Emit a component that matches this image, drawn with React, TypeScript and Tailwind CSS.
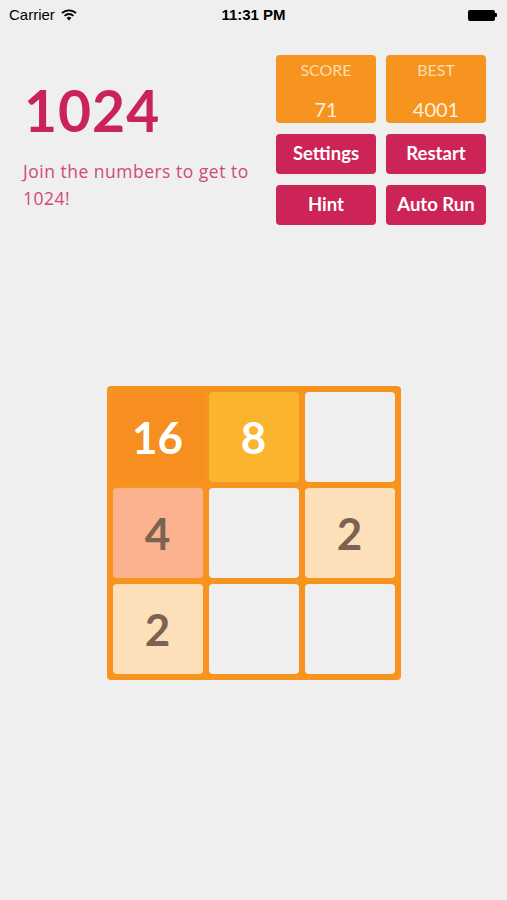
import React from "react";

const tiles: (number | null)[] = [16, 8, null, 4, null, 2, 2, null, null];

function tileClass(v: number | null) {
  if (v === null) return "bg-[#efefef]";
  if (v === 16) return "bg-[#f68f1f] text-white";
  if (v === 8) return "bg-[#fbb42e] text-white";
  if (v === 4) return "bg-[#fcb28e] text-[#7a6350]";
  return "bg-[#fde0b9] text-[#7a6350]";
}

export default function App() {
  return (
    <div className="w-[507px] h-[900px] bg-[#efefef] flex flex-col overflow-hidden">
      {/* status bar */}
      <div className="h-[30px] flex items-center px-[9px] relative font-['Liberation_Sans',sans-serif] text-[15px] text-black">
        <div className="flex items-center gap-[6px]">
          <span>Carrier</span>
          <svg width="16" height="12" viewBox="0 0 16 12">
            <path d="M1 4.2 A10 10 0 0 1 15 4.2" stroke="black" strokeWidth="1.8" fill="none" />
            <path d="M3.6 6.8 A6.3 6.3 0 0 1 12.4 6.8" stroke="black" strokeWidth="1.8" fill="none" />
            <path d="M8 11.5 L5.6 8.9 A3.4 3.4 0 0 1 10.4 8.9 Z" fill="black" />
          </svg>
        </div>
        <div className="absolute left-0 right-0 text-center font-bold text-[15px] pointer-events-none">11:31 PM</div>
        <div className="ml-auto flex items-center mr-[1px]">
          <div className="w-[27px] h-[11px] bg-black rounded-[2px]" />
          <div className="w-[2px] h-[4px] bg-black rounded-r-[1px]" />
        </div>
      </div>

      {/* header */}
      <div className="flex pt-[24px] pl-[23px] pr-[21px] font-['Lato',sans-serif]">
        <div className="flex-1 flex flex-col">
          <div className="text-[57px] leading-none font-bold text-[#c9235a] mt-[28px] ml-[1px] tracking-[1px]">1024</div>
          <div className="font-['Open_Sans',sans-serif] text-[17.5px] leading-[27px] text-[#d04b74] mt-[19px] w-[250px] tracking-[0.5px]">Join the numbers to get to 1024!</div>
        </div>
        <div className="grid grid-cols-[100px_100px] gap-x-[10px] gap-y-[11px] mt-[1px]">
          <div className="h-[68px] rounded-[4px] bg-[#f7931f] flex flex-col items-center">
            <div className="text-[16px] mt-[3px] text-[#fddcae]">SCORE</div>
            <div className="text-[20px] mt-[12px] text-[#fff0da]">71</div>
          </div>
          <div className="h-[68px] rounded-[4px] bg-[#f7931f] flex flex-col items-center">
            <div className="text-[16px] mt-[3px] text-[#fddcae]">BEST</div>
            <div className="text-[20px] mt-[12px] text-[#fff0da]">4001</div>
          </div>
          {["Settings", "Restart", "Hint", "Auto Run"].map((t) => (
            <div key={t} className="h-[40px] rounded-[4px] bg-[#cc2456] flex items-center justify-center text-white font-bold text-[18.5px]">
              {t}
            </div>
          ))}
        </div>
      </div>

      {/* board */}
      <div className="flex justify-center mt-[161px]">
        <div className="w-[294px] h-[294px] bg-[#f7931f] rounded-[4px] p-[6px] grid grid-cols-3 grid-rows-3 gap-[6px] font-['Lato',sans-serif]">
          {tiles.map((v, i) => (
            <div key={i} className={`rounded-[4px] flex items-center justify-center text-[44px] font-bold ${tileClass(v)}`}>
              {v ?? ""}
            </div>
          ))}
        </div>
      </div>
    </div>
  );
}
